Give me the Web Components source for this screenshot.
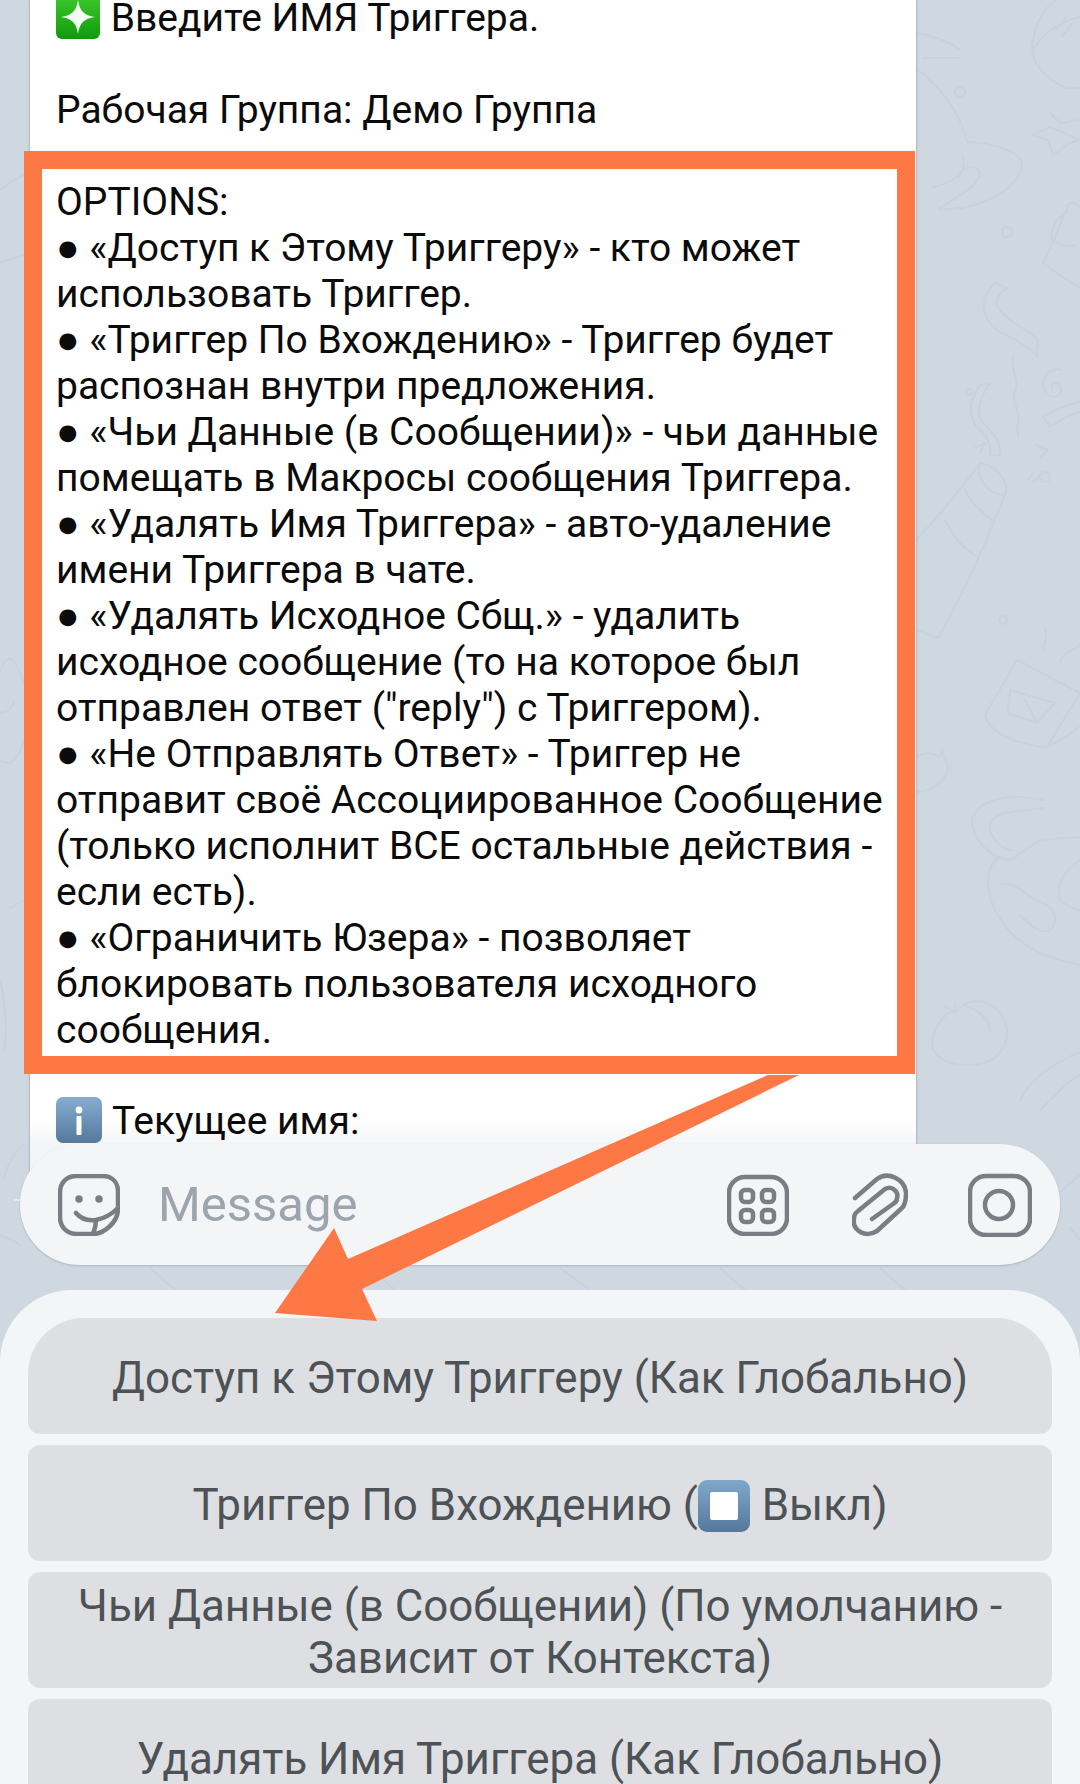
<!DOCTYPE html>
<html>
<head>
<meta charset="utf-8">
<style>
  html, body { margin: 0; padding: 0; background: #cfd8e1; }
  body { width: 1080px; height: 1784px; overflow: hidden; font-family: Roboto, "Liberation Sans", sans-serif; }
</style>
</head>
<body>
<tg-screen>
  <tg-bubble>
    <div class="first"><tg-emoji kind="spark"></tg-emoji> Введите ИМЯ Триггера.</div>
    <br>
    <div>Рабочая Группа: Демо Группа</div>
    <tg-highlight>OPTIONS:<br>● «Доступ к Этому Триггеру» - кто может использовать Триггер.<br>● «Триггер По Вхождению» - Триггер будет распознан внутри предложения.<br>● «Чьи Данные (в Сообщении)» - чьи данные помещать в Макросы сообщения Триггера.<br>● «Удалять Имя Триггера» - авто-удаление имени Триггера в чате.<br>● «Удалять Исходное Сбщ.» - удалить исходное сообщение (то на которое был отправлен ответ ("reply") с Триггером).<br>● «Не Отправлять Ответ» - Триггер не отправит своё Ассоциированное Сообщение (только исполнит ВСЕ остальные действия - если есть).<br>● «Ограничить Юзера» - позволяет блокировать пользователя исходного сообщения.</tg-highlight>
    <div><tg-emoji kind="info"></tg-emoji> Текущее имя:</div>
  </tg-bubble>
  <tg-input placeholder="Message"></tg-input>
  <tg-keyboard>
    <tg-key>Доступ к Этому Триггеру (Как Глобально)</tg-key>
    <tg-key>Триггер По Вхождению (<tg-emoji kind="stop"></tg-emoji> Выкл)</tg-key>
    <tg-key>Чьи Данные (в Сообщении) (По умолчанию - Зависит от Контекста)</tg-key>
    <tg-key>Удалять Имя Триггера (Как Глобально)</tg-key>
  </tg-keyboard>
</tg-screen>

<script>
// wallpaper doodles, drawn in page coordinates
const DOODLES = `
  <path d="M1067 88C1045 80 1028 60 1033 40C1036 22 1045 8 1056 0M1080 88H1067M1033 50C1045 30 1065 20 1080 17M1056 30l10 -12M1062 36l10 -12"/>
  <path d="M916 33C935 36 950 42 960 50M923 58L960 58M916 68C945 90 962 118 967 142C990 143 1022 150 1022 165C1020 190 975 212 938 209C960 195 980 185 980 172C975 165 970 165 963 170C955 180 945 185 933 187M963 155C965 165 963 172 958 178"/>
  <circle cx="960" cy="92" r="5"/><circle cx="1007" cy="232" r="5"/><circle cx="1003" cy="620" r="4"/><circle cx="969" cy="392" r="3"/>
  <path d="M1050 113L1060 123L1080 120M1080 140L1070 143L1053 155L1048 140L1032 135L1050 127Z"/>
  <path d="M1080 207C1072 200 1066 202 1067 212C1055 220 1050 228 1052 240C1060 245 1068 248 1075 245M1065 212L1052 245L1043 263C1055 272 1068 282 1080 287"/>
  <path d="M995 283C982 295 978 315 997 330C1010 338 1030 345 1037 357L1038 340C1030 330 1015 325 1007 317C995 308 992 298 1007 288Z"/>
  <path d="M1013 357C1010 370 1020 380 1015 390C1010 400 1022 415 1018 425C1015 430 1020 435 1018 437"/>
  <path d="M1062 370C1045 365 1040 385 1045 392C1050 400 1065 398 1060 385C1055 380 1050 385 1052 390"/>
  <path d="M990 383C978 400 975 415 985 425C995 435 1002 445 1000 455L990 455C992 440 985 435 975 425C968 410 970 400 980 385ZM1080 402C1065 405 1050 412 1043 417L1050 427C1060 420 1070 415 1080 412"/>
  <path d="M980 452L985 443L975 448M1036 445L1048 450L1040 458M1040 475l-6 6M1028 480l5 -8M1045 472a5 5 0 1 0 0.1 0"/>
  <path d="M980 463C995 465 1010 480 1005 495C985 545 960 600 938 638L917 630M980 463C960 490 940 515 916 540M980 463C975 480 990 495 1005 495M965 490C972 505 985 515 992 520M945 520C955 540 965 550 975 555"/>
  <path d="M1017 660L1080 693M1080 693L1047 747C1020 745 990 735 985 715L1017 660M1010 690L1055 703L1037 723L1008 713ZM1025 700L1037 723M1047 747C1060 740 1072 735 1080 725"/>
  <path d="M1045 650C1040 645 1050 640 1045 630M1060 662C1065 650 1072 652 1080 645"/>
  <path d="M940 750C948 760 952 775 940 782C932 790 925 792 917 792M917 756C925 752 932 752 940 757L944 748"/>
  <path d="M1043 800C1005 792 978 800 972 820C972 840 990 855 1000 857C1008 862 1015 858 1018 855L1040 840C1055 838 1070 838 1080 837M1043 808C1020 812 985 810 990 830C995 845 1005 850 1012 850M1000 857C985 865 985 890 995 910C1015 950 1055 960 1080 965M1000 885C1010 880 1020 890 1035 900C1055 905 1060 920 1050 930C1040 935 1030 925 1020 915M1080 860C1065 870 1055 885 1060 900C1065 905 1075 910 1080 910"/>
  <path d="M955 1012C945 1010 932 1030 932 1045C935 1060 950 1065 970 1065C995 1065 1007 1050 1007 1030C1005 1010 985 995 965 1004L955 1012M955 1012L945 1006M955 1012L955 1002M965 1006C975 1008 990 1018 990 1032"/>
  <path d="M1080 1052C1050 1065 1030 1080 1020 1100M1040 1110C1060 1090 1070 1080 1080 1075"/>
  <path d="M1080 1175L1060 1192M1070 1228L1080 1240"/>
  <path d="M0 190C8 184 16 178 24 175M0 262C8 260 16 258 24 255"/>
  <path d="M0 672C6 655 12 650 24 682M0 712C6 714 12 708 14 702M0 760C10 766 18 762 24 740"/>
  <path d="M10 908L24 900M0 980C5 1000 8 1030 4 1052"/>
  <path d="M24 1145C16 1150 10 1160 4 1177M0 1235C8 1238 14 1240 20 1245"/>
  <path d="M150 1268L175 1290M370 1268L395 1290M560 1268L590 1290M720 1268L745 1290M880 1268L905 1290"/>
`;

// the chat screen: wallpaper, message, input bar, keyboard, annotation arrow
class TgScreen extends HTMLElement {
  connectedCallback() {
    this.attachShadow({ mode: "open" });
    this.shadowRoot.innerHTML = `
      <style>
        :host { display: flex; flex-direction: column; position: relative; width: 1080px; height: 1784px; overflow: hidden; background: #cfd8e1; }
        svg { position: absolute; left: 0; top: 0; }
        .wall { fill: none; stroke: #c8d2dc; stroke-width: 2; stroke-linecap: round; stroke-linejoin: round; }
        .arrow { z-index: 5; pointer-events: none; }
        ::slotted(tg-bubble) { position: relative; z-index: 1; }
        ::slotted(tg-input), ::slotted(tg-keyboard) { position: relative; z-index: 2; }
      </style>
      <svg class="wall" width="1080" height="1784" viewBox="0 0 1080 1784">
        ${DOODLES}
        <path d="M15 1200H22" stroke="#e8ebee"/>
      </svg>
      <slot></slot>
      <svg class="arrow" width="1080" height="1784" viewBox="0 0 1080 1784">
        <polygon fill="#fd7844" points="768,1075 799,1075 362,1289 377,1321 275,1313 334,1228 348,1259"/>
      </svg>
    `;
  }
}

class TgBubble extends HTMLElement {
  connectedCallback() {
    this.attachShadow({ mode: "open" });
    this.shadowRoot.innerHTML = `
      <style>
        :host {
          display: block; box-sizing: border-box; flex: none;
          width: 886px; height: 1179px; margin: 0 0 -35px 30px; padding: 0 26px;
          background: linear-gradient(#fff 1120px, #f4f5f7 1144px);
          color: #0b0b0b;
          font: 400 39px/46px Roboto, sans-serif;
          box-shadow: 0 0 2px 0 rgba(100, 115, 130, .8);
        }
        /* the top line is cut by the top of the screen: 5px of its line box are gone */
        ::slotted(.first) { line-height: 36px; margin-bottom: 5px; }
      </style>
      <slot></slot>
    `;
  }
}

class TgHighlight extends HTMLElement {
  connectedCallback() {
    this.attachShadow({ mode: "open" });
    this.shadowRoot.innerHTML = `
      <style>
        :host {
          display: block; box-sizing: border-box;
          width: 891px; margin: 18px 0 24px -32px; padding: 10px 10px 3px 14px;
          border: 18px solid #fd7844; background: #fff;
        }
      </style>
      <slot></slot>
    `;
  }
}

// the emoji squares are drawn, the font has no colour emoji
const EMOJI = {
  spark: `<svg viewBox="0 0 44 44" width="44" height="44">
      <defs><linearGradient id="g" x1="0" y1="0" x2="0" y2="1"><stop offset="0" stop-color="#3fc92f"/><stop offset="1" stop-color="#0f9a0c"/></linearGradient></defs>
      <rect x="0" y="0" width="44" height="44" rx="6" fill="url(#g)"/>
      <path d="M22 5C23.5 16 28 20.5 39 22C28 23.5 23.5 28 22 39C20.500 28 16 23.500 5 22C16 20.500 20.500 16 22 5Z" fill="#f2fff0"/>
    </svg>`,
  info: `<svg viewBox="0 0 46 46" width="46" height="46">
      <defs><linearGradient id="b" x1="0" y1="0" x2="0" y2="1"><stop offset="0" stop-color="#86add0"/><stop offset="1" stop-color="#55789b"/></linearGradient></defs>
      <rect width="46" height="46" rx="7" fill="url(#b)"/>
      <circle cx="23" cy="13" r="3.400" fill="#fff"/><rect x="20.500" y="19" width="5" height="19" rx="1" fill="#fff"/>
    </svg>`,
  stop: `<svg viewBox="0 0 52 52" width="52" height="52">
      <defs><linearGradient id="s" x1="0" y1="0" x2="0" y2="1"><stop offset="0" stop-color="#80a8cc"/><stop offset="1" stop-color="#55789b"/></linearGradient></defs>
      <rect width="52" height="52" rx="9" fill="url(#s)"/>
      <rect x="12" y="12" width="28" height="28" rx="2" fill="#fff"/>
    </svg>`
};

class TgEmoji extends HTMLElement {
  connectedCallback() {
    const size = { spark: 44, info: 46, stop: 52 }[this.getAttribute("kind")];
    this.attachShadow({ mode: "open" });
    this.shadowRoot.innerHTML = `
      <style>
        /* negative block margins keep the square out of the line height */
        :host { display: inline-block; vertical-align: 6px; line-height: 0; margin: ${(16 - size) / 2}px 1px ${(16 - size) / 2}px 0; }
        svg { display: block; }
      </style>
      ${EMOJI[this.getAttribute("kind")]}
    `;
  }
}

class TgInput extends HTMLElement {
  connectedCallback() {
    this.attachShadow({ mode: "open" });
    this.shadowRoot.innerHTML = `
      <style>
        :host {
          display: flex; align-items: center; box-sizing: border-box; flex: none;
          width: 1040px; height: 121px; margin-left: 20px; padding: 0 28px 0 38px;
          background: #f4f5f7; border-radius: 60px;
          box-shadow: 0 1px 2px rgba(90, 105, 120, .3);
        }
        svg { flex: none; fill: none; stroke: #7a7e82; stroke-width: 4.5; stroke-linecap: round; stroke-linejoin: round; }
        span { flex: 1; margin-left: 38px; margin-top: 1px; color: #9ca5ad; font: 400 49px/52px Roboto, sans-serif; }
        .grid { margin-right: 63px; }
        .clip { margin-right: 60px; }
      </style>
      <svg width="62" height="62" viewBox="58 1173 62 62">
        <path d="M77 1175H102C112 1175 118 1181 118 1191V1208C118 1222 103 1233 93 1233H77C67 1233 60 1226 60 1216V1192C60 1181 67 1175 77 1175Z"/>
        <path d="M76 1212C81 1218 88 1220 96 1219C106 1217 112 1213 118 1207"/>
        <path d="M96 1219C96 1224 95 1228 93 1233"/>
        <circle cx="79" cy="1198" r="2" fill="#7a7e82" stroke-width="3.500"/>
        <circle cx="99" cy="1198" r="2" fill="#7a7e82" stroke-width="3.500"/>
      </svg>
      <span>${this.getAttribute("placeholder")}</span>
      <svg class="grid" width="62" height="62" viewBox="727 1173 62 62">
        <rect x="729" y="1176" width="58" height="57" rx="16"/>
        <rect x="741" y="1189" width="12" height="12" rx="4"/><rect x="762" y="1189" width="12" height="12" rx="4"/>
        <rect x="741" y="1209" width="12" height="12" rx="4"/><rect x="762" y="1209" width="12" height="12" rx="4"/>
      </svg>
      <svg class="clip" width="56" height="64" viewBox="852 1172 56 64">
        <path d="M855 1197L877 1178C888 1170 905 1178 906 1192C906 1199 905 1204 902 1207L877 1230C866 1237 852 1230 854 1218C854 1215 855 1212 858 1210L885 1188C892 1184 899 1191 897 1197C897 1200 895 1202 893 1203L872 1218"/>
      </svg>
      <svg width="64" height="64" viewBox="968 1172 64 64">
        <rect x="970" y="1175" width="60" height="59" rx="16"/>
        <circle cx="999" cy="1204" r="14"/>
      </svg>
    `;
  }
}

class TgKeyboard extends HTMLElement {
  connectedCallback() {
    this.attachShadow({ mode: "open" });
    this.shadowRoot.innerHTML = `
      <style>
        :host {
          display: flex; flex-direction: column; gap: 11px; box-sizing: border-box; flex: none;
          width: 1080px; margin-top: 25px; padding: 28px 28px 0;
          background: #f4f5f7; border-radius: 72px 72px 0 0;
        }
        ::slotted(tg-key:first-child) { border-radius: 56px 56px 12px 12px; }
      </style>
      <slot></slot>
    `;
  }
}

class TgKey extends HTMLElement {
  connectedCallback() {
    this.attachShadow({ mode: "open" });
    this.shadowRoot.innerHTML = `
      <style>
        :host {
          display: flex; align-items: center; justify-content: center; flex: none; box-sizing: border-box;
          height: 116px; padding: 3px 40px 0; text-align: center;
          background: #dddfe2; color: #4d5257; border-radius: 12px;
          font: 400 43.9px/52px Roboto, sans-serif;
        }
        div { width: 100%; }
      </style>
      <div><slot></slot></div>
    `;
  }
}

customElements.define("tg-screen", TgScreen);
customElements.define("tg-bubble", TgBubble);
customElements.define("tg-highlight", TgHighlight);
customElements.define("tg-emoji", TgEmoji);
customElements.define("tg-input", TgInput);
customElements.define("tg-keyboard", TgKeyboard);
customElements.define("tg-key", TgKey);
</script>
</body>
</html>
